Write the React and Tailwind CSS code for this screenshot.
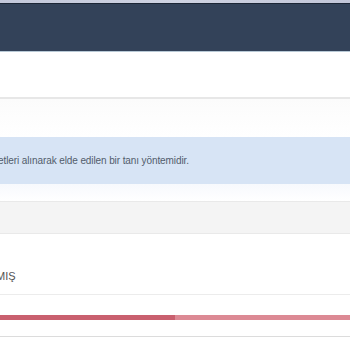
export default function App() {
  return (
    <div className="w-[350px] h-[350px] overflow-hidden bg-white font-['Liberation_Sans',Arial,sans-serif]">
      {/* top bar */}
      <div className="h-[3px] bg-gradient-to-r from-[#c3c8da] via-[#cfd3e2] to-[#c2c6d8]" />
      <div className="h-[49px] bg-[#334259] border-t border-t-[#1c2636] border-b border-b-[#b8c9d6]" />

      <div className="h-[45px] bg-white" />
      <div className="h-[2px] bg-[#e7e7e7]" />
      <div className="h-[38px] bg-gradient-to-b from-[#fbfbfb] to-white" />

      {/* info box */}
      <div className="h-[47px] bg-[#d7e4f5] flex items-center">
        <p className="-ml-[2px] text-[10px] tracking-[-0.1px] leading-none text-[#525c6b] whitespace-nowrap">
          etleri alınarak elde edilen bir tanı yöntemidir.
        </p>
      </div>

      <div className="h-[17px] bg-gradient-to-b from-[#f7f9fd] to-white" />

      {/* grey section */}
      <div className="h-[33px] bg-[#f4f4f4] border-t border-b border-[#e9e9e9]" />

      {/* status row */}
      <div className="h-[61px] flex flex-col justify-end pb-[12px] border-b border-[#ececec]">
        <span className="-ml-[4px] text-[11px] leading-none text-[#555]">MIŞ</span>
      </div>

      {/* progress */}
      <div className="h-[42px] flex flex-col pt-[20px] border-b border-[#dcdcdc]">
        <div className="h-[5px] flex">
          <div className="w-[175px] bg-[#c9606f]" />
          <div className="flex-1 bg-[#dc8994]" />
        </div>
      </div>
    </div>
  );
}
